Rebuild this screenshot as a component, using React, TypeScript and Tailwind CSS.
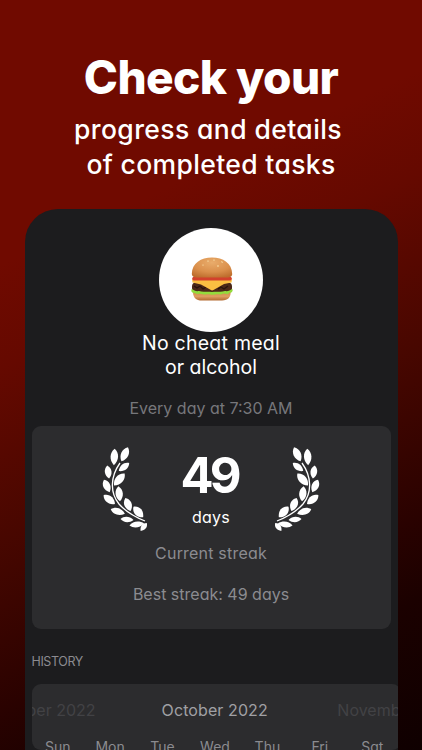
import type { ReactNode } from 'react';

const font = "font-['Inter','Liberation_Sans',sans-serif] [font-feature-settings:'cv11','ss03']";

function Line({ className, children }: { className: string; children: ReactNode }) {
  return <div className={`shrink-0 whitespace-pre ${className}`}><span>{children}</span></div>;
}

// x, y, rotation, half length, half width
const leaves: [number, number, number, number, number][] = [
  [19.3, 17, 3, 8.2, 3.7],
  [29.7, 14.2, 25, 7.8, 3.7],
  [13.2, 32, -8, 6.6, 3.3],
  [29, 27, 52, 6.6, 3],
  [11.8, 46, -25, 6.8, 3.5],
  [24.3, 39.5, 42, 8, 3.9],
  [14.3, 59.5, -52, 7.2, 3.6],
  [24.2, 53.7, -6, 7.6, 3.6],
  [22.8, 71.5, -73, 7.4, 3.3],
  [33, 64.5, -22, 7, 3.7],
  [32, 79.5, -86, 6.5, 2.6],
  [43.3, 72, -42, 7.2, 3.9],
  [41.8, 84.5, -98, 7.4, 2.8],
  [48.7, 87, 38, 5, 2.5],
];

function Laurel({ className = '' }: { className?: string }) {
  return (
    <svg viewBox="0 0 60 100" className={`h-[100px] w-[60px] shrink-0 ${className}`} fill="white">
      <path d="M25 23C15 37 15 53 24 64C31 72 40 77 50 81" fill="none" stroke="white" strokeWidth="1.3" />
      {leaves.map(([x, y, r, l, w], i) => (
        <path
          key={i}
          transform={`translate(${x} ${y}) rotate(${r})`}
          d={`M0 ${-l}C${w * 1.35} ${-l * 0.5} ${w * 1.35} ${l * 0.4} 0 ${l}C${-w * 1.35} ${l * 0.4} ${-w * 1.35} ${-l * 0.5} 0 ${-l}Z`}
        />
      ))}
    </svg>
  );
}

function Burger() {
  return (
    <svg viewBox="0 0 42 44" className="mb-[2px] ml-px h-[44px] w-[42px]">
      <defs>
        <radialGradient id="bun" cx=".5" cy=".25" r=".8">
          <stop offset="0" stopColor="#e9ac6b" />
          <stop offset=".6" stopColor="#da8f4b" />
          <stop offset="1" stopColor="#bd6c2c" />
        </radialGradient>
        <linearGradient id="base" x2="0" y2="1">
          <stop offset="0" stopColor="#c9813f" />
          <stop offset=".6" stopColor="#dfa061" />
          <stop offset="1" stopColor="#b36a30" />
        </linearGradient>
      </defs>
      <path d="M2 33H39.500C40.500 40 37 43.500 31 43.500H11C5 43.500 1.500 41 2 33Z" fill="url(#base)" />
      <rect x="1" y="25.500" width="40" height="9.500" rx="4" fill="#4b2818" />
      <path d="M3 29L6 31L9 29L12 32L15 30M27 32L30 30L33 32L37 29" stroke="#29130d" strokeWidth="1.300" fill="none" />
      <path d="M.8 32C3 33.500 5 34.500 8 34C12 35.500 16 34 21 35C26 34 30 35.500 34 34C37 34.500 39 33.500 41.200 32C42.500 33.500 41 36.500 38.500 35.500C37 38 34.500 36.500 32.500 36.500C29.500 38.500 27 36.500 24 37.500C20 38.500 18 36.500 15 37.500C12 38 10 36 7 37C5 37 4 35.500 3 36C.5 36-.3 33.500.8 32Z" fill="#93dc3c" />
      <path d="M1 22.500H41L40.500 25.500L33 27L22.500 33Q21 34 19.500 32.800L10 27.500L1.500 25.500Z" fill="#fbbf42" />
      <path d="M2 20H40Q42 22 39.500 23.500H2.500Q0 22 2 20Z" fill="#d3412c" />
      <path d="M.8 17C1 6 10 .5 21 .5S41 6 41.200 17C41.300 19.500 39 20.500 36 20.500H6C3 20.500.8 19.500.8 17Z" fill="url(#bun)" />
      <g fill="#f9dda5">
        <ellipse cx="17" cy="4" rx="1" ry=".6" />
        <ellipse cx="23" cy="3" rx="1" ry=".6" />
        <ellipse cx="31" cy="5" rx="1" ry=".6" transform="rotate(25 31 5)" />
        <ellipse cx="27" cy="9" rx=".7" ry="1" />
        <ellipse cx="12" cy="8" rx=".8" ry=".6" />
      </g>
    </svg>
  );
}

const days = ['Sun', 'Mon', 'Tue', 'Wed', 'Thu', 'Fri', 'Sat'];

export default function App() {
  return (
    <main className={`flex h-[750px] w-[422px] flex-col items-center overflow-hidden bg-[linear-gradient(155deg,#700a00_0%,#700a00_28%,#650900_39%,#480700_57%,#2a0200_75%,#1b0100_84%,#0f0000_100%)] text-white ${font}`}>
      <header className="flex h-[209px] shrink-0 flex-col items-center pt-[47px]">
        <Line className="h-[60px] text-[46px] leading-[60px] font-extrabold tracking-[-0.6px]">Check your</Line>
        <Line className="mt-[5px] h-[35px] pr-[6px] text-[26.500px] leading-[35px] font-medium tracking-[0.4px]">progress and details</Line>
        <Line className="h-[35px] text-[26.500px] leading-[35px] font-medium tracking-[0.35px]">of completed tasks</Line>
      </header>

      <section className="flex w-[373px] flex-1 flex-col items-center overflow-hidden rounded-t-[33px] bg-[#1c1c1e] pt-[19px]">
        <div className="flex size-[104px] shrink-0 items-center justify-center rounded-full bg-white"><Burger /></div>
        <Line className="-mt-px h-[24px] text-[19.500px] leading-[24px] tracking-[0.25px]">No cheat meal</Line>
        <Line className="h-[24px] text-[19.500px] leading-[24px]">or alcohol</Line>
        <Line className="mt-[17px] h-[24px] text-[16px] leading-[24px] text-[#77777b]">Every day at 7:30 AM</Line>

        <div className="mt-[6px] flex h-[203px] w-[359px] shrink-0 flex-col items-center rounded-[9px] bg-[#2c2c2e]">
          <div className="flex h-[115px] w-full shrink-0 justify-center gap-[26px] pt-[14px]">
            <Laurel />
            <div className="flex w-[60px] flex-col items-center pt-[6px]">
              <Line className="h-[60px] pr-[4px] text-[49px] leading-[60px] font-bold tracking-[-4px]">49</Line>
              <Line className="mt-[1px] h-[20px] text-[16px] leading-[20px] tracking-[0.2px]">days</Line>
            </div>
            <Laurel className="-scale-x-100" />
          </div>
          <Line className="h-[24px] text-[16px] leading-[24px] tracking-[0.2px] text-[#8b8b90]">Current streak</Line>
          <Line className="mt-[17px] h-[24px] text-[16px] leading-[24px] text-[#8b8b90]">Best streak: 49 days</Line>
        </div>

        <div className="mt-[23px] h-[20px] w-[359px] shrink-0 text-[12.500px] leading-[20px] tracking-[-0.4px] text-[#8b8b90]"><span>HISTORY</span></div>

        <div className="mt-[12px] ml-[7px] w-[369px] flex-1 self-start overflow-hidden rounded-[9px] bg-[#2c2c2e]">
          <div className="mt-[14px] flex h-[24px] items-center text-[16px] whitespace-pre">
            <span className="-ml-[5px] w-[136px] text-[#424245]">ber 2022</span>
            <span className="w-[177px] tracking-[0.1px] text-[#a0a0a4]">October 2022</span>
            <span className="text-[#424245]">Novemb</span>
          </div>
          <div className="mt-[15px] flex w-[367px] text-[14px] leading-[20px] text-[#8b8b90]">
            {days.map((d) => <span key={d} className="w-[52.430px] shrink-0 text-center">{d}</span>)}
          </div>
        </div>
      </section>
    </main>
  );
}
